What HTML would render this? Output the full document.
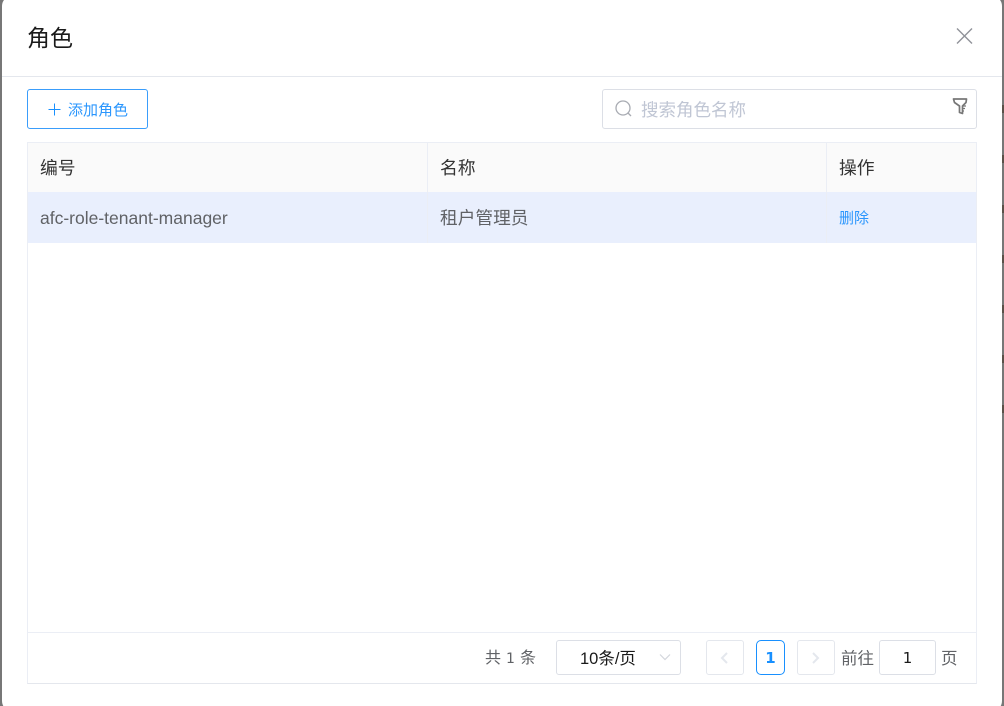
<!DOCTYPE html>
<html lang="zh">
<head>
<meta charset="utf-8">
<title>角色</title>
<style>
html,body{margin:0;padding:0;width:1004px;height:706px;overflow:hidden;background:#777;font-family:"Liberation Sans","Noto Sans CJK SC",sans-serif;}
#root{position:relative;width:1004px;height:706px;overflow:hidden;background:#777;}
.abs{position:absolute;box-sizing:border-box;}
.t{position:absolute;white-space:nowrap;}
.dj{font-family:"DejaVu Sans",sans-serif;}
#modal{position:absolute;left:2px;top:-4px;width:1000px;height:715px;background:#fff;border-radius:10px;}
.mark{position:absolute;left:1002px;width:2px;height:8px;background:#5b5048;}
</style>
</head>
<body>
<div id="root">
<div class="mark" style="top:255px"></div>
<div class="mark" style="top:305px"></div>
<div class="mark" style="top:355px"></div>
<div class="mark" style="top:405px"></div>
<div class="mark" style="top:105px"></div>
<div class="mark" style="top:155px"></div>
<div class="mark" style="top:205px"></div>
<div id="modal"></div>

<div class="t" style="left:27px;top:23px;font-size:23px;line-height:30px;color:#1a1a1a">角色</div>
<svg class="abs" style="left:955px;top:27px" width="18" height="18" viewBox="0 0 18 18"><path d="M2 1.500L17 16.500M17 1.500L2 16.500" stroke="#8f9299" stroke-width="1.400" fill="none"/></svg>
<div class="abs" style="left:2px;top:76px;width:1000px;height:1px;background:#e4e7ed"></div>

<div class="abs" style="left:27px;top:89px;width:121px;height:40px;border:1px solid #3a9dfb;border-radius:3px"></div>
<svg class="abs" style="left:48px;top:103px" width="13" height="13" viewBox="0 0 13 13"><path d="M6.500 0.500V12.500M0.500 6.500H12.500" stroke="#1890ff" stroke-width="1" fill="none"/></svg>
<div class="t" style="left:68px;top:100.500px;font-size:15px;line-height:20px;color:#2a96fd">添加角色</div>

<div class="abs" style="left:602px;top:89px;width:375px;height:40px;border:1px solid #dcdfe6;border-radius:3px"></div>
<svg class="abs" style="left:614px;top:99px" width="20" height="20" viewBox="0 0 20 20"><circle cx="9" cy="9" r="7" stroke="#a8abb2" stroke-width="1.300" fill="none"/><path d="M14 14L17 17" stroke="#a8abb2" stroke-width="1.300"/></svg>
<div class="t" style="left:641px;top:98px;font-size:17.500px;line-height:24px;color:#c0c6d4">搜索角色名称</div>
<svg class="abs" style="left:951px;top:96px" width="18" height="20" viewBox="0 0 18 20"><path d="M2.500 3H15.500L15 6.500L11.500 10V17.500L8.500 16.500V10L3.500 6.500Z" stroke="#777" stroke-width="1.700" fill="none" stroke-linejoin="round"/><path d="M11.500 10H15M11.500 12.500H14M11.500 15H13" stroke="#777" stroke-width="1.200"/></svg>

<div class="abs" style="left:27px;top:142px;width:950px;height:542px;border:1px solid #ebeef5;border-bottom-color:#e4e7ed"></div>
<div class="abs" style="left:28px;top:143px;width:948px;height:49px;background:#fafafa"></div>
<div class="abs" style="left:28px;top:192px;width:948px;height:51px;background:#e9effd"></div>
<div class="abs" style="left:427px;top:143px;width:1px;height:100px;background:#ebeef5"></div>
<div class="abs" style="left:826px;top:143px;width:1px;height:100px;background:#ebeef5"></div>
<div class="abs" style="left:28px;top:632px;width:948px;height:1px;background:#ebeef5"></div>

<div class="t" style="left:40px;top:156px;font-size:17.800px;line-height:24px;color:#333">编号</div>
<div class="t" style="left:440px;top:156px;font-size:17.800px;line-height:24px;color:#333">名称</div>
<div class="t" style="left:839px;top:156px;font-size:17.800px;line-height:24px;color:#333">操作</div>
<div class="t" style="left:40px;top:206px;font-size:17.500px;line-height:24px;color:#606266">afc-role-tenant-manager</div>
<div class="t" style="left:440px;top:206px;font-size:17.700px;line-height:24px;color:#606266">租户管理员</div>
<div class="t" style="left:839px;top:208.500px;font-size:15px;line-height:20px;color:#2a96fd">删除</div>

<div class="t" style="left:485px;top:649px;font-size:16px;line-height:20px;color:#606266">共<span class="dj" style="font-size:14px;margin:0 5px">1</span>条</div>
<div class="abs" style="left:556px;top:640px;width:125px;height:35px;border:1px solid #dcdfe6;border-radius:3px"></div>
<div class="t" style="left:580px;top:649px;font-size:16.500px;line-height:20px;color:#1a1a1a">10条/页</div>
<svg class="abs" style="left:659px;top:653px" width="12" height="8" viewBox="0 0 12 8"><path d="M1 1.500L6 6.500L11 1.500" stroke="#d3d6dc" stroke-width="1.200" fill="none"/></svg>

<div class="abs" style="left:706px;top:640px;width:38px;height:35px;border:1px solid #e4e7ed;border-radius:3px"></div>
<svg class="abs" style="left:719px;top:651px" width="10" height="14" viewBox="0 0 10 14"><path d="M8 2L3 7L8 12" stroke="#e4e7ed" stroke-width="2" fill="none"/></svg>
<div class="abs" style="left:756px;top:640px;width:29px;height:35px;border:1px solid #1890ff;border-radius:5px"></div>
<div class="t dj" style="left:756px;top:648px;width:29px;text-align:center;font-size:15px;line-height:20px;font-weight:bold;color:#1890ff">1</div>
<div class="abs" style="left:797px;top:640px;width:38px;height:35px;border:1px solid #e4e7ed;border-radius:3px"></div>
<svg class="abs" style="left:811px;top:651px" width="10" height="14" viewBox="0 0 10 14"><path d="M2 2L7 7L2 12" stroke="#e4e7ed" stroke-width="2" fill="none"/></svg>
<div class="t" style="left:841px;top:649px;font-size:16.500px;line-height:20px;color:#606266">前往</div>
<div class="abs" style="left:879px;top:640px;width:57px;height:35px;border:1px solid #dcdfe6;border-radius:3px"></div>
<div class="t dj" style="left:879px;top:648px;width:57px;text-align:center;font-size:15px;line-height:20px;color:#1a1a1a">1</div>
<div class="t" style="left:941px;top:649px;font-size:16.500px;line-height:20px;color:#606266">页</div>
</div>
</body>
</html>
